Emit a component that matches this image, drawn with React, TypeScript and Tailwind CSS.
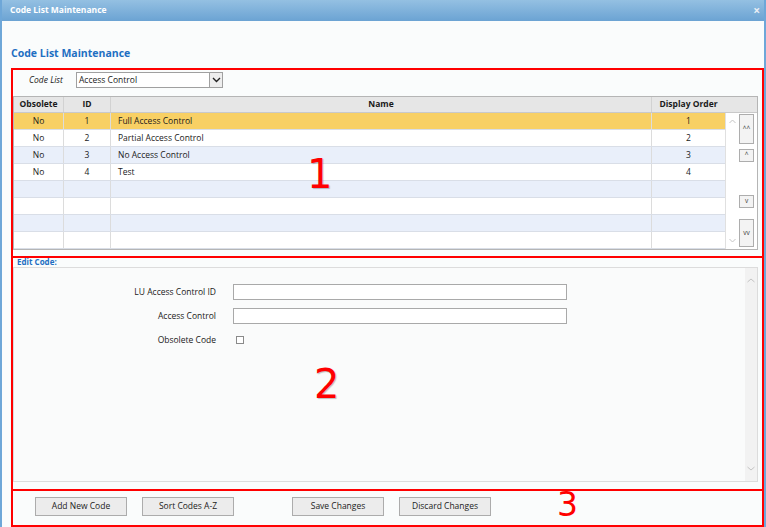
import React from "react";

const ROWS = [
	{ obsolete: "No", id: "1", name: "Full Access Control", order: "1" },
	{ obsolete: "No", id: "2", name: "Partial Access Control", order: "2" },
	{ obsolete: "No", id: "3", name: "No Access Control", order: "3" },
	{ obsolete: "No", id: "4", name: "Test", order: "4" },
	null,
	null,
	null,
	null,
];

const FONT = { fontFamily: '"Open Sans", "Noto Sans", sans-serif' };
const NUM_FONT = { fontFamily: '"DejaVu Sans", sans-serif' };

function MoveButton({ label, h }: { label: string; h: string }) {
	return (
		<div
			className={`w-[15px] ${h} border border-[#adadad] bg-[#f3f3f3] flex items-center justify-center text-[6.5px] text-[#333] leading-none`}
		>
			{label}
		</div>
	);
}

function Btn({ children }: { children: React.ReactNode }) {
	return (
		<div className="w-[92px] h-[19px] border border-[#acacac] bg-[#ececec] flex items-center justify-center text-[8.5px] text-[#222]">
			{children}
		</div>
	);
}

export default function App() {
	return (
		<div
			className="w-[766px] h-[527px] bg-[#fafcfc] border-x-2 border-[#6ea7d8] flex flex-col overflow-hidden text-[#1a1a1a]"
			style={FONT}
		>
			{/* title bar */}
			<div className="h-[21px] shrink-0 bg-gradient-to-b from-[#94c0e2] to-[#6ba3d3] flex items-center justify-between pl-[8px] pr-[4px]">
				<span className="text-white font-bold text-[8.5px]">Code List Maintenance</span>
				<span className="text-[#e8eef5] text-[12px] font-bold leading-none">×</span>
			</div>

			<div className="h-[25px] shrink-0" />
			<div className="pl-[9px] text-[10.5px] font-bold text-[#1e6fc2] leading-[14px]">Code List Maintenance</div>
			<div className="h-[8px] shrink-0" />

			{/* section 1 */}
			<div className="relative ml-[9px] h-[190px] border-2 border-[#ff0000] flex flex-col">
				<div className="flex items-center h-[16px] mt-[2px]">
					<span className="ml-[16px] w-[47px] italic text-[8.5px]">Code List</span>
					<div className="w-[147px] h-[16px] border border-[#a0a0a0] bg-white flex items-center justify-between pl-[2px]">
						<span className="text-[8.5px]">Access Control</span>
						<div className="w-[13px] h-[14px] border-l border-[#a0a0a0] bg-[#eeeeee] flex items-center justify-center">
							<svg width="9" height="6" viewBox="0 0 9 6">
								<polyline points="1,1 4.5,4.5 8,1" fill="none" stroke="#222" strokeWidth="1.4" />
							</svg>
						</div>
					</div>
				</div>

				<div className="mt-[8px] mr-[4px] border border-[#b5b5b5] bg-white text-[8.5px]">
					<div className="flex h-[16px] bg-[#e6e6e6] border-b border-[#c9c9c9] font-bold">
						<div className="w-[50px] border-r border-[#d2d2d2] flex items-center justify-center">Obsolete</div>
						<div className="w-[47px] border-r border-[#d2d2d2] flex items-center justify-center">ID</div>
						<div className="w-[541px] border-r border-[#d2d2d2] flex items-center justify-center">Name</div>
						<div className="w-[73px] flex items-center justify-center">Display Order</div>
					</div>
					<div className="flex">
						<div className="w-[711px]">
							{ROWS.map((r, i) => (
								<div
									key={i}
									className={`flex h-[17px] border-b border-[#d9dee7] ${
										i === 0 ? "bg-[#f8d064]" : i % 2 === 0 ? "bg-[#e9effa]" : "bg-white"
									}`}
								>
									<div className="w-[50px] border-r border-[#dcdcdc] flex items-center justify-center">{r?.obsolete}</div>
									<div className="w-[47px] border-r border-[#dcdcdc] flex items-center justify-center">{r?.id}</div>
									<div className="w-[541px] border-r border-[#dcdcdc] flex items-center pl-[7px]">{r?.name}</div>
									<div className="w-[73px] flex items-center justify-center">{r?.order}</div>
								</div>
							))}
						</div>
						<div className="flex-1 flex border-l border-[#e0e0e0]">
							<div className="w-[12px] flex flex-col items-center justify-between py-[6px]">
								<svg width="7" height="5" viewBox="0 0 7 5">
									<polyline points="0.5,4 3.5,1 6.5,4" fill="none" stroke="#c4c4c4" strokeWidth="1" />
								</svg>
								<svg width="7" height="5" viewBox="0 0 7 5">
									<polyline points="0.5,1 3.5,4 6.5,1" fill="none" stroke="#c4c4c4" strokeWidth="1" />
								</svg>
							</div>
							<div className="flex flex-col items-center pt-[1px] pl-[1px]">
								<MoveButton label="^^" h="h-[30px]" />
								<div className="h-[5px]" />
								<MoveButton label="^" h="h-[13px]" />
								<div className="h-[33px]" />
								<MoveButton label="v" h="h-[13px]" />
								<div className="h-[11px]" />
								<MoveButton label="vv" h="h-[28px]" />
							</div>
						</div>
					</div>
				</div>

				<span
					className="absolute left-[294px] top-[84px] text-[40px] leading-none text-[#ff0000] [text-shadow:1px_1px_1px_rgba(0,0,0,0.25)]"
					style={NUM_FONT}
				>
					1
				</span>
			</div>

			{/* section 2 */}
			<div className="relative ml-[9px] h-[233px] border-x-2 border-b-2 border-[#ff0000] flex flex-col">
				<div className="h-[9px] pl-[4px] text-[8px] font-bold text-[#1e6fc2] leading-[8px]">Edit Code:</div>
				<div className="flex-1 mr-[4px] mb-[7px] border border-[#dcdcdc] bg-[#fafbfb] flex">
					<div className="flex-1 pt-[16px]">
						<div className="flex items-center h-[16px]">
							<span className="w-[202px] text-right text-[8.5px]">LU Access Control ID</span>
							<div className="ml-[17px] w-[334px] h-[16px] border border-[#a9a9a9] bg-white" />
						</div>
						<div className="flex items-center h-[16px] mt-[8px]">
							<span className="w-[202px] text-right text-[8.5px]">Access Control</span>
							<div className="ml-[17px] w-[334px] h-[16px] border border-[#a9a9a9] bg-white" />
						</div>
						<div className="flex items-center h-[16px] mt-[8px]">
							<span className="w-[202px] text-right text-[8.5px]">Obsolete Code</span>
							<div className="ml-[20px] w-[8px] h-[8px] border border-[#8a8a8a] bg-white" />
						</div>
					</div>
					<div className="w-[12px] bg-[#f2f2f2] flex flex-col items-center justify-between py-[10px]">
						<svg width="8" height="5" viewBox="0 0 8 5">
							<polyline points="0.5,4 4,1 7.5,4" fill="none" stroke="#c4c4c4" strokeWidth="1" />
						</svg>
						<svg width="8" height="5" viewBox="0 0 8 5">
							<polyline points="0.5,1 4,4 7.5,1" fill="none" stroke="#c4c4c4" strokeWidth="1" />
						</svg>
					</div>
				</div>

				<span
					className="absolute left-[301px] top-[106px] text-[40px] leading-none text-[#ff0000] [text-shadow:1px_1px_1px_rgba(0,0,0,0.25)]"
					style={NUM_FONT}
				>
					2
				</span>
			</div>

			{/* section 3 */}
			<div className="relative ml-[9px] flex-1 border-x-2 border-b-2 border-[#ff0000] flex items-center pl-[22px] pb-[3px]">
				<Btn>Add New Code</Btn>
				<div className="w-[15px]" />
				<Btn>Sort Codes A-Z</Btn>
				<div className="w-[58px]" />
				<Btn>Save Changes</Btn>
				<div className="w-[15px]" />
				<Btn>Discard Changes</Btn>

				<span
					className="absolute left-[544px] top-[-3px] text-[33px] leading-none text-[#ff0000]"
					style={NUM_FONT}
				>
					3
				</span>
			</div>
		</div>
	);
}
